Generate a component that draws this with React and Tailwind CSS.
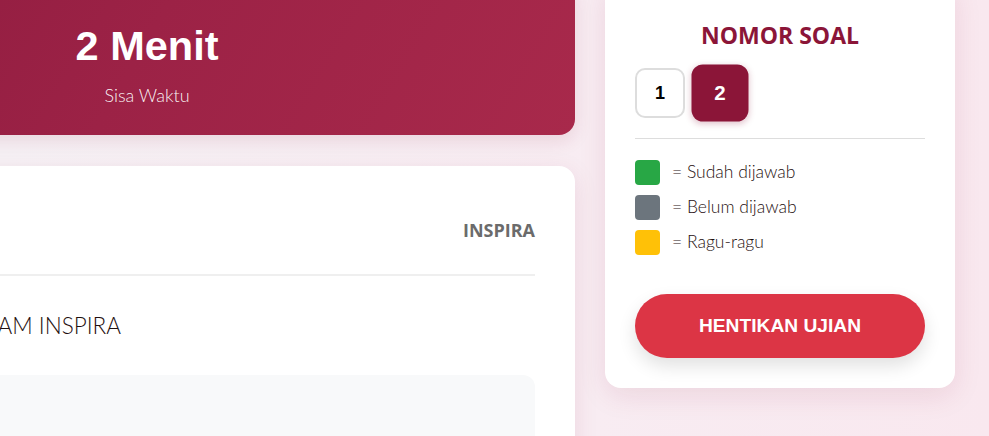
import React from "react";

export default function App() {
  return (
    <div className="w-[989px] h-[436px] overflow-hidden bg-[linear-gradient(90deg,#f6f1f5_0%,#f8ecf2_60%,#f9e8ef_100%)]">
      <div className="flex gap-[30px] -mt-[20px] -ml-[300px] pr-[34px]">
        {/* Main column */}
        <div className="flex flex-col w-[875px] shrink-0">
          <div className="h-[155px] rounded-[16px] bg-[linear-gradient(120deg,#8b1a3d_0%,#9c2246_50%,#a8294b_100%)] shadow-[0_6px_18px_rgba(139,21,56,0.12)] flex pl-[370px] pt-[42px]">
            <div className="flex flex-col items-center w-[154px]">
              <div className="text-white font-bold text-[41.5px] leading-[48px] whitespace-nowrap font-['Liberation_Sans',Arial,sans-serif]">
                2 Menit
              </div>
              <div className="mt-[14px] text-white/95 text-[18px] leading-[22px] font-light font-['Lato',sans-serif] whitespace-nowrap">
                Sisa Waktu
              </div>
            </div>
          </div>
          <div className="mt-[31px] bg-white rounded-[16px] shadow-[0_6px_24px_rgba(139,21,56,0.10)] px-[40px] pt-[40px] h-[400px]">
            <div className="h-[48px] flex items-center justify-end">
              <span className="text-[18px] font-bold text-[#6b6b6b] font-['Open_Sans',sans-serif]">INSPIRA</span>
            </div>
            <div className="mt-[20px] h-[2px] bg-[#efefef]" />
            <div className="mt-[36px] w-[381px] flex justify-end text-[22.5px] leading-[28px] font-light text-[#1f1010] font-['Lato',sans-serif] whitespace-nowrap">
              <span>UJIAN MASUK PROGRAM INSPIRA</span>
            </div>
            <div className="mt-[35px] h-[200px] rounded-[12px] bg-[#f8f9fa]" />
          </div>
        </div>

        {/* Sidebar */}
        <div className="w-[350px] shrink-0 bg-white rounded-[16px] shadow-[0_8px_28px_rgba(139,21,56,0.10)] px-[30px] pt-[40px] pb-[30px] self-start">
          <h3 className="text-center text-[23px] leading-[30px] font-bold text-[#8b1538] font-['Open_Sans',sans-serif]">
            NOMOR SOAL
          </h3>
          <div className="mt-[18px] flex gap-[10px] items-center">
            <button className="w-[50px] h-[50px] rounded-[10px] border-2 border-[#dddddd] bg-white text-black font-bold text-[18px] font-['Liberation_Sans',Arial,sans-serif]">
              1
            </button>
            <button className="w-[50px] h-[50px] rounded-[10px] bg-[#8b1538] text-white font-bold text-[18px] scale-[1.14] shadow-[0_2px_6px_rgba(139,21,56,0.25)] font-['Liberation_Sans',Arial,sans-serif]">
              2
            </button>
          </div>
          <div className="mt-[20px] h-px bg-[#dddddd]" />
          <div className="mt-[21px] flex flex-col gap-[11px]">
            {[
              ["bg-[#28a745]", "Sudah dijawab"],
              ["bg-[#6c757d]", "Belum dijawab"],
              ["bg-[#ffc107]", "Ragu-ragu"],
            ].map(([c, t]) => (
              <div key={t} className="flex items-center gap-[12px] h-[24px]">
                <div className={`w-[25px] h-[25px] rounded-[4px] ${c}`} />
                <span className="text-[17.5px] font-light text-[#1f1010] font-['Lato',sans-serif] whitespace-nowrap">
                  = {t}
                </span>
              </div>
            ))}
          </div>
          <button className="mt-[40px] w-full h-[64px] rounded-full bg-[#dc3545] text-white font-bold text-[19.2px] font-['Liberation_Sans',Arial,sans-serif] shadow-[0_8px_18px_rgba(0,0,0,0.12)]">
            HENTIKAN UJIAN
          </button>
        </div>
      </div>
    </div>
  );
}
